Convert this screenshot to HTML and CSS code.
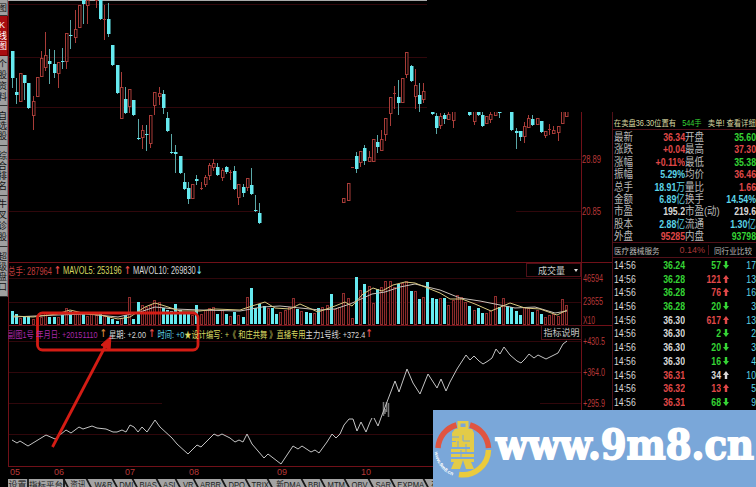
FILE: index.html
```html
<!DOCTYPE html>
<html lang="zh-CN">
<head>
  <meta charset="UTF-8" />
  <title>行情 K线图</title>
  <link rel="stylesheet" href="styles.css">
</head>
<body>
  <div class="app">

    <!-- Onglets verticaux -->
    <nav class="side">
      <a class="side-tab t-first">图</a>
      <a class="side-tab t-k active">K线图</a>
      <a class="side-tab t-info">个股资料</a>
      <a class="side-tab t-own">自选股</a>
      <a class="side-tab t-rank">综合排名</a>
      <a class="side-tab t-diag">牛叉诊股</a>
      <a class="side-tab t-disk">超级盘口</a>
    </nav>

    <main class="charts">
      <section class="pane price">
        <svg id="priceChart" width="604" height="262" viewBox="8 0 604 262">
          <path class="grid" d="M9 4.5H427M9 57.5H427M9 107.5H427M9 159.5H581M9 211.5H260M516 211.5H581"/>
          <path class="axis" d="M8.5 0V262M581.5 112V262"/>
          <path class="topline" d="M8 .5H427"/>
          <text class="scale" x="582" y="163" textLength="19" lengthAdjust="spacingAndGlyphs">28.89</text>
          <text class="scale" x="582" y="214.500" textLength="19" lengthAdjust="spacingAndGlyphs">20.85</text>
        </svg>
      </section>

      <section class="pane volume">
        <header class="pane-head">
          <div class="labels">
            <span class="red dim">总手: 287964</span><i class="arr red">↑</i>
            <span class="yellow">MAVOL5: 253196</span><i class="arr red">↑</i>
            <span class="white">MAVOL10: 269830</span><i class="arr last cyan">↓</i>
          </div>
          <button class="pick">成交量<b></b></button>
        </header>
        <svg id="volumeChart" width="604" height="63" viewBox="8 262 604 63">
          <path class="grid" d="M9 278.5H581M9 302.5H581"/>
          <path class="axis" d="M8.500 262V325M581.5 262V325M8 262.5H612"/>
          <text class="scale" x="583" y="282" textLength="20" lengthAdjust="spacingAndGlyphs">46594</text>
          <text class="scale" x="583" y="305" textLength="20" lengthAdjust="spacingAndGlyphs">23655</text>
          <text class="scale" x="583" y="323.5" textLength="12" lengthAdjust="spacingAndGlyphs">X10</text>
        </svg>
      </section>

      <section class="pane indicator">
        <header class="pane-head ind-head">
          <div class="labels">
            <span class="purple i-name">副图1号</span>
            <span class="purple">年月日: +20151110</span><i class="arr orange">↑</i>
            <span class="white">星期: +2.00</span><i class="arr red">↑</i>
            <span class="cyan">时间: +0</span>
            <span class="yellow">★设计编写: +《 和庄共舞 》直播专用</span>
            <span class="white">主力1号线: +372.4</span><i class="arr last red">↑</i>
          </div>
          <button class="explain">指标说明</button>
        </header>
        <svg id="indicatorChart" width="604" height="142" viewBox="8 325 604 142">
          <path class="grid" d="M9 341.5H581M9 372.5H581M9 403.5H162M540 403.5H581M9 434.5H581"/>
          <path class="axis" d="M8.5 325V467M581.5 325V467M8 466.5H612M8 325.500H612"/>
          <text class="scale" x="583" y="344.5" textLength="22" lengthAdjust="spacingAndGlyphs">+430.5</text>
          <text class="scale" x="583" y="375.500" textLength="22" lengthAdjust="spacingAndGlyphs">+364.0</text>
          <text class="scale" x="583" y="406.500" textLength="22" lengthAdjust="spacingAndGlyphs">+295.9</text>
          <path class="hatch" d="M383.5 402V416M386.500 402V412M388.500 403V417M385 409V414"/>
        </svg>
      </section>

      <div class="months">
        <span>05</span><span>06</span><span>07</span><span>08</span><span>09</span><span>10</span>
      </div>

      <nav class="tabs">
        <a class="flat">设置</a><a class="flat wide">指标平台</a>
        <a class="w23"><span>资讯</span></a><a class="w26"><span>W&amp;R</span></a><a class="w20"><span>DMI</span></a><a class="w24"><span>BIAS</span></a><a class="w19"><span>ASI</span></a><a class="w18"><span>VR</span></a><a class="w28"><span>ARBR</span></a><a class="w24"><span>DPO</span></a><a class="w22"><span>TRIX</span></a><a class="w34"><span>新DMA</span></a><a class="w19"><span>BBI</span></a><a class="w24"><span>MTM</span></a><a class="w24"><span>OBV</span></a><a class="w22"><span>SAR</span></a><a class="w33"><span>EXPMA</span></a><a class="w24"><span>布林</span></a>
      </nav>
    </main>

    <aside class="quote">
      <div class="notice"><span>在卖盘36.30位置有</span><span class="green">544手</span><span>卖单! 查看详细</span></div>
      <div class="facts">
        <span>最新</span><b class="red">36.34</b><span>开盘</span><b class="green">35.60</b>
        <span>涨跌</span><b class="red">+0.04</b><span>最高</span><b class="red">37.30</b>
        <span>涨幅</span><b class="red">+0.11%</b><span>最低</span><b class="green">35.38</b>
        <span>振幅</span><b class="cyan">5.29%</b><span>均价</span><b class="red">36.46</b>
        <span>总手</span><b class="cyan">18.91<i>万</i></b><span>量比</span><b class="red">1.66</b>
        <span>金额</span><b class="cyan">6.89<i>亿</i></b><span>换手</span><b class="cyan">14.54%</b>
        <span>市盈</span><b class="white">195.2</b><span>市盈(动)</span><b class="white">219.6</b>
        <span>股本</span><b class="cyan">2.88<i>亿</i></b><span>流通</span><b class="cyan">1.30<i>亿</i></b>
        <span>外盘</span><b class="red">95285</b><span>内盘</span><b class="green">93798</b>
      </div>
      <div class="sector"><span>医疗器械服务</span><em>0.14%</em><span class="peer">同行业比较</span></div>
      <div class="ticks" id="ticks"></div>
    </aside>

    <div class="cover"></div>

    <svg class="mark" width="180" height="150" viewBox="30 305 180 150">
      <rect x="37.500" y="313" width="160.500" height="37" rx="5"/>
      <path d="M52.500 447L106 345"/>
      <path class="head" d="M111 336L110 350L101 345Z"/>
    </svg>

    <div class="brand">
      <svg width="323" height="77" viewBox="433 410 323 77">
        <path class="ring-red" d="M438 448A25.500 25.500 0 0 1 456.500 425M470 425A25.500 25.500 0 0 1 488.500 448"/>
        <path class="ring-yellow" d="M488.500 450A25.500 25.500 0 0 1 459 474.500"/>
        <path class="man" fill-rule="evenodd" d="M457.500 421H468.500V429H472L474 433V450H470V447H452V433L455 429H457.500ZM460.500 423.500V427H465.500V423.500Z"/>
        <path class="man" d="M451 449H474V452H451ZM451 454H474V457H451ZM451 459H474V462H471L474 469H466L463 460L460 469H451L454 462H451Z"/>
        <path class="slit" d="M452 437H459M463 435V441H470M458 441V447M452 441.500H456M466 444V453M461 450V459"/>
        <path id="rim" fill="none" d="M434.500 452A29 29 0 0 0 457 477"/>
        <text class="rim-text"><textPath href="#rim" textLength="31">www.9m8.cn</textPath></text>
        <text class="site" x="496" y="459" textLength="258" lengthAdjust="spacingAndGlyphs">www.9m8.cn</text>
      </svg>
    </div>
  </div>

  <script src="chart.js"></script>
</body>
</html>
```
FILE: styles.css
```css
* { box-sizing: border-box; }

body {
  margin: 0;
  background: #000;
  overflow: hidden;
  font-family: "Liberation Sans", "Noto Sans CJK SC", sans-serif;
}

.app {
  position: relative;
  display: grid;
  grid-template-columns: 8px 604px 144px;
  width: 756px;
  height: 487px;
  overflow: hidden;
}

/* ===== Couleurs ===== */
.red { color: #e04848; }
.red.dim { color: #c03c3c; }
.green { color: #35d435; }
.cyan { color: #5cd5e8; }
.white { color: #d8d8d8; }
.yellow { color: #d8d860; }
.purple { color: #a828a8; }
.orange { color: #d08038; }

/* ===== Onglets de gauche ===== */
.side { display: flex; flex-direction: column; width: 8px; overflow: hidden; }
.side-tab {
  display: flex;
  align-items: center;
  justify-content: center;
  flex: none;
  width: 8px;
  padding-right: 3px;
  background: #a0a0a0;
  border-bottom: 1px solid #333;
  border-right: 1px solid #777;
  color: #111;
  font-size: 9px;
  line-height: 10px;
  writing-mode: vertical-rl;
  text-orientation: upright;
  white-space: nowrap;
}
.side-tab.active { background: #a80c10; border-color: #700; color: #fff; }
.t-first { height: 16px; }
.t-k { height: 40px; letter-spacing: 1px; }
.t-info { height: 50px; letter-spacing: 2px; }
.t-own { height: 40px; letter-spacing: 1px; }
.t-rank { height: 50px; letter-spacing: 1px; }
.t-diag { height: 51px; letter-spacing: 2px; }
.t-disk { height: 50px; letter-spacing: 1px; }

/* ===== Graphiques ===== */
.charts { display: flex; flex-direction: column; }
.pane { display: grid; flex: none; }
.pane > * { grid-area: 1 / 1; }
.pane svg { display: block; }
.price { height: 262px; }
.volume { height: 63px; }
.indicator { height: 142px; }

.grid { stroke: #30070b; fill: none; }
.axis { stroke: #701018; fill: none; }
.topline { stroke: #aaa; }
.scale { fill: #b83838; font-size: 10px; }
.up { fill: #000; stroke: #a83c38; }
.up-wick { stroke: #a83c38; fill: none; }
.down { fill: #66eaf0; }
.down-wick { stroke: #5aa8a8; fill: none; }
.vol-up { fill: #140405; stroke: #8c2c2c; }
.ma5 { fill: none; stroke: #d8c880; }
.ma10 { fill: none; stroke: #c8c0b8; }
.trend { fill: none; stroke: #c4c4c4; }
.hatch { fill: none; stroke: #777; stroke-width: 1.5; }

.pane-head {
  z-index: 1;
  display: flex;
  align-items: center;
  height: 16px;
  white-space: nowrap;
}
.labels {
  display: flex;
  align-items: center;
  width: 240px;
  font-size: 10px;
  transform: scaleX(.745);
  transform-origin: left;
}
.labels > * { flex: none; }
.labels .arr { width: 15px; font: bold 11px/11px "DejaVu Sans"; text-align: center; }
.labels .last { width: 9px; }
.pane-head button {
  margin-left: auto;
  border: 1px solid #501018;
  background: #000;
  padding: 0;
  color: #c8c8c8;
  font: 9px "Noto Sans CJK SC", sans-serif;
  line-height: 11px;
}
.pane-head .pick { width: 55px; height: 14px; margin-right: 31px; padding-left: 9px; }
.pick b {
  display: inline-block;
  margin: 0 0 2px 9px;
  border: 2.5px solid transparent;
  border-top: 3px solid #ddd;
  border-bottom: 0;
}
.ind-head { height: 17px; }
.ind-head .labels { font-size: 9.5px; transform: scaleX(.765); }
.i-name { margin-right: 3px; }
.ind-head .labels .arr { width: 15px; }
.ind-head .labels .last { width: 10px; }
.explain { width: 41px; height: 15px; margin-right: 30px; align-self: flex-start; }

.months {
  display: grid;
  grid-template-columns: 44px 71px 64px 88px 84px 1fr;
  flex: none;
  height: 12px;
  padding-left: 2px;
  color: #b83838;
  font-size: 9px;
  line-height: 10px;
}

.tabs { display: flex; height: 8px; overflow: hidden; background: #a4a4a4; color: #222; font-size: 9px; line-height: 12px; white-space: nowrap; }
.tabs a { position: relative; display: flex; justify-content: center; flex: none; }
.tabs a span { transform: translateX(2px) scaleX(.85); }
.tabs a:not(.flat)::before {
  content: "";
  position: absolute;
  left: 0;
  top: 0;
  width: 2px;
  height: 9px;
  background: #181818;
  transform: skewX(28deg);
}
.tabs .flat { width: 21px; border-right: 2px solid #222; }
.tabs .wide { width: 36px; font-size: 8.500px; }
.w18 { width: 18px; }
.w19 { width: 19px; }
.w20 { width: 20px; }
.w22 { width: 22px; }
.w23 { width: 23px; }
.w24 { width: 24px; }
.w26 { width: 26px; }
.w28 { width: 28px; }
.w33 { width: 33px; }
.w34 { width: 34px; }

/* ===== Panneau de cotation ===== */
.quote {
  margin-top: 112px;
  border-left: 1px solid #501018;
  overflow: hidden;
  white-space: nowrap;
}
.notice {
  display: flex;
  justify-content: space-between;
  align-items: center;
  width: 166px;
  height: 18px;
  padding: 3px 0 0 1px;
  border-bottom: 1px solid #501018;
  color: #d8d8a0;
  font-size: 8.500px;
  transform: scaleX(.86);
  transform-origin: left;
}
.facts {
  display: grid;
  grid-template-columns: 20px 51px 20px 1fr;
  grid-auto-rows: 12.4px;
  height: 113px;
  padding: 1px 0 0 1px;
  border-bottom: 1px solid #501018;
  font-size: 11px;
  line-height: 12.4px;
  color: #b8b8b8;
}
.facts span { transform: scaleX(.86); transform-origin: left; }
.facts b { text-align: right; font-size: 11.500px; transform: scaleX(.76); transform-origin: right; }
.facts i { font-style: normal; font-weight: normal; }
.sector {
  display: flex;
  align-items: center;
  height: 15px;
  padding-left: 1px;
  border-bottom: 1px solid #501018;
  color: #b8b8b8;
  font-size: 8px;
}
.sector span { transform: scaleX(.95); transform-origin: left; }
.sector em { margin-left: auto; padding-right: 3px; border-right: 1px solid #501018; font-style: normal; font-size: 9px; color: #a83838; }
.sector .peer { width: 42px; margin: 0 0 0 5px; }

.tick {
  display: grid;
  grid-template-columns: 30px 41px 36px 10px 1fr;
  height: 13.7px;
  padding-left: 1px;
  font-size: 11px;
  line-height: 14px;
  font-weight: bold;
  color: #d8d8d8;
}
.tick span { text-align: right; transform: scaleX(.79); transform-origin: right; }
.tick .time { text-align: left; transform-origin: left; font-weight: normal; }
.tick .last { font-weight: normal; }
.tick svg { display: block; margin: 3px 0 0 2px; fill: currentColor; }

/* ===== Calques ===== */
.cover { position: absolute; left: 427px; top: 0; width: 329px; height: 112px; background: #000; }
.mark { position: absolute; left: 30px; top: 305px; fill: none; stroke: #d41c14; stroke-width: 2.800; }
.mark .head { fill: #d41c14; stroke-width: 1; }
.brand { position: absolute; left: 433px; top: 410px; width: 323px; height: 77px; background: #7aa7d9; }
.brand svg { display: block; }
.ring-red { fill: none; stroke: #e05540; stroke-width: 5.500; }
.ring-yellow { fill: none; stroke: #ebcb3c; stroke-width: 5.500; }
.man { fill: #e3cb48; }
.slit { fill: none; stroke: #7aa7d9; stroke-width: 1; }
.rim-text { fill: #fff; font: bold 5px "Liberation Sans"; }
.site { fill: #fff; stroke: #fff; stroke-width: 1.800; font: bold 41px "DejaVu Serif", serif; }
```
FILE: chart.js
```js
const STEP = 4.2;
const X0 = 12;
const BASE = 324;

// [index, hausse (1) / baisse (0), haut du corps, bas du corps, haut mèche, bas mèche]
const candles = [
  [0,0,51,78,51,87],[1,0,92,95,78,103],[2,1,73,101,73,101],[3,0,75,83,75,99],[4,0,83,108,83,108],
  [5,1,101,115,96,129],[6,1,77,96,77,96],[7,1,58,76,51,76],[8,1,55,67,32,70],[9,0,61,64,49,83],
  [10,0,64,73,50,77],[11,1,62,73,62,87],[12,0,61,62,48,68],[13,1,33,61,33,68],[14,0,35,36,20,48],
  [15,1,29,37,10,42],[16,1,5,27,5,27],[17,0,0,4,0,23],[18,1,0,5,0,23],[20,1,0,0,0,7],
  [21,0,0,19,0,19],[22,1,19,19,5,39],[23,0,19,34,3,36],[24,0,45,65,45,65],[25,0,65,93,65,93],
  [26,1,87,118,72,118],[27,0,99,113,87,113],[28,1,89,106,89,112],[29,0,100,115,100,115],[30,0,138,139,119,139],
  [31,1,130,137,125,148],[32,0,134,135,125,150],[33,1,115,143,115,147],[34,1,92,105,92,114],[35,1,93,96,87,104],
  [36,0,94,108,90,113],[37,0,118,131,112,131],[38,0,152,153,134,153],[39,0,152,154,145,172],[40,0,156,173,156,173],
  [41,0,182,189,173,189],[42,0,188,199,182,203],[43,1,184,198,184,198],[44,0,179,181,175,184],[45,1,188,188,182,189],
  [46,1,177,184,175,186],[47,1,165,175,163,179],[48,1,163,167,159,170],[49,0,167,175,163,175],[50,1,170,177,168,180],
  [51,0,167,172,166,173],[52,1,172,172,170,179],[53,0,171,189,166,189],[54,1,184,197,184,204],[55,0,187,193,184,196],
  [56,1,178,187,178,190],[57,0,185,194,168,194],[58,0,210,211,195,211],[59,0,213,223,203,223],
  [79,1,198,202,198,202],[80,1,183,200,183,200],[81,1,167,167,167,167],[82,0,156,169,152,172],[83,1,151,162,151,166],
  [84,0,148,161,145,164],[85,1,157,161,151,161],[86,1,139,161,139,161],[87,0,142,147,135,152],[88,1,139,150,130,150],
  [89,1,118,134,118,140],[90,1,97,113,97,125],[91,1,93,93,86,108],[92,0,97,103,80,114],[93,1,78,102,78,102],
  [94,1,52,74,52,77],[95,0,66,81,65,81],[96,1,85,96,69,108],[97,0,95,104,83,111],[98,1,91,99,83,102],
  [100,0,112,114,112,114],[101,0,116,128,113,133],[102,1,116,125,113,128],[103,0,115,119,113,123],[104,1,114,119,112,119],
  [105,1,110,120,110,127],[109,0,112,115,112,115],[110,1,110,121,110,124],[111,0,112,115,112,115],[112,0,115,126,112,126],
  [113,1,116,123,116,123],[114,1,114,119,112,122],[115,1,110,115,110,115],[116,0,112,113,112,117],[119,0,112,130,112,130],
  [120,0,131,133,128,148],[121,0,131,137,131,140],[122,1,126,136,122,142],[123,1,118,127,115,127],[124,0,119,125,115,125],
  [125,1,118,124,118,124],[126,0,121,132,121,132],[127,1,131,135,131,137],[128,1,129,129,124,134],[129,1,130,133,126,133],
  [130,1,126,132,126,140],[131,1,108,123,108,123],[132,1,108,116,108,116]
];

// Sommet de chaque barre de volume, "c" = barre pleine
const volumes = ('311c 314c 318 316c 316c 319 318 317 312 317c 317c 317 315c 308 311c 311 314 314c 316 314 315 314c 316 317c 319c ' +
  '321c 318 315c 297 319c 302c 305 307 305 300 302 308c 310c 311c 304c 310c 313c 314c 315 305c 314 310 308 307 314c ' +
  '310 314c 316 312c 315 317c 297 288c 308c 304c 306c 308 308c 314c 312 310 307 298 309c 311 312c 313c 313 308c 307 ' +
  '305 294c 309 307 293 298 318 277c 290 284c 286 303 289c 287 281 281 287 284c 283 281 291c 291 299c 297 282c ' +
  '298c 299c 298 298c 305 300 295 297 302 306c 310 308c 313c 313 311 296 307c 298 306c 307c 311c 315c 307 308 312c ' +
  '310 314c 317 315 314 316 299 305').split(' ');

const ma5 = '13,316 33,317 57,314 70,310 87,314 100,315 118,319 130,317 145,307 155,303 165,306 180,311 200,311 215,309 240,310 252,306 265,302 275,308 290,309 300,304 318,312 335,306 345,302 352,306 363,294 373,288 382,291 393,285 405,282 415,283 425,287 440,293 450,299 462,299 475,304 491,311 510,303 525,308 540,309 557,315 567,310';
const ma10 = '13,317 57,315 87,314 118,317 140,312 155,307 175,309 200,310 240,311 262,307 280,306 300,308 320,310 335,309 350,304 372,294 385,292 400,287 415,284 440,290 460,298 480,301 500,305 515,308 535,307 555,313 567,311';

const trend = [
  '12,440 17,443 20,441 28,446 46,435 55,439 66,430 71,433 79,427 83,429 92,426 97,428 106,429 113,432 117,432 122,430 126,432 130,425 134,427 138,432 142,427 147,432 155,420 160,427 172,438 177,444 188,454 197,445 201,447 214,434 218,436 222,434 230,438 235,442 239,440 243,442 247,434 252,444 264,458 268,454 281,464 293,446 298,449 302,446 311,452 315,450 319,453 327,442 332,434 336,438 340,434 344,425 349,419 353,419 357,431 361,422 366,432 370,422 372,418',
  '374,418 378,426 382,415 395,381 399,392 407,369 413,383 420,394 428,374 437,388 441,379 446,391 450,382 457,369 466,355 470,360 474,356 479,361 483,364 488,361 492,358 496,349 500,354 504,347 510,355 517,361 521,363 525,359 529,354 534,358 538,355 546,359 558,353 563,344 567,341'
];

// [heure, prix, couleur prix, volume, couleur volume, sens, dernier]
const ticks = [
  ['14:56','36.24','green','57','green','down','17'],
  ['14:56','36.28','green','121','red','up','13'],
  ['14:56','36.28','green','76','red','up','16'],
  ['14:56','36.28','green','20','green','down','3'],
  ['14:56','36.30','white','617','red','up','13'],
  ['14:56','36.30','white','2','green','down','2'],
  ['14:56','36.30','white','20','green','down','3'],
  ['14:56','36.30','white','16','green','down','4'],
  ['14:56','36.31','red','34','white','up','10'],
  ['14:56','36.32','red','13','red','up','5'],
  ['14:56','36.31','red','68','green','down','9']
];

function add(svg, markup) {
  svg.insertAdjacentHTML('beforeend', markup);
}

function drawCandles() {
  let out = '';
  candles.forEach(([i, up, top, bottom, high, low]) => {
    const x = Math.round(X0 + STEP * i - 0.5) + 0.5;
    out += `<path class="${up ? 'up-wick' : 'down-wick'}" d="M${x} ${high}V${low + 1}"/>`;
    if (up && bottom - top > 1) {
      out += `<rect class="up" x="${x - 1}" y="${top + 0.5}" width="2.5" height="${bottom - top}"/>`;
    } else if (up) {
      out += `<path class="up-wick" d="M${x - 1.5} ${top + 0.5}h3"/>`;
    } else {
      out += `<rect class="down" x="${x - 1.5}" y="${top}" width="3.500" height="${bottom - top}"/>`;
    }
  });
  add(document.getElementById('priceChart'), out);
}

function drawVolume() {
  let out = '';
  volumes.forEach((v, i) => {
    const top = parseInt(v);
    const x = Math.round(X0 + STEP * i - 0.5) + 0.5;
    if (v.endsWith('c')) {
      out += `<rect class="down" x="${x - 1.5}" y="${top}" width="3" height="${BASE - top}"/>`;
    } else {
      out += `<rect class="vol-up" x="${x - 1}" y="${top + 0.5}" width="2" height="${BASE - top}"/>`;
    }
  });
  out += `<polyline class="ma10" points="${ma10}"/><polyline class="ma5" points="${ma5}"/>`;
  add(document.getElementById('volumeChart'), out);
}

function drawTicks() {
  const arrows = {
    up: 'M3 0L6 4H4.200V8H1.800V4H0Z',
    down: 'M3 8L0 4H1.800V0H4.200V4H6Z'
  };
  document.getElementById('ticks').innerHTML = ticks.map(t => `
    <div class="tick">
      <span class="time">${t[0]}</span><span class="${t[2]}">${t[1]}</span><span class="${t[4]}">${t[3]}</span>
      <svg class="${t[4]}" width="6" height="8"><path d="${arrows[t[5]]}"/></svg><span class="cyan last">${t[6]}</span>
    </div>`).join('');
}

drawCandles();
drawVolume();
add(document.getElementById('indicatorChart'), trend.map(p => `<polyline class="trend" points="${p}"/>`).join(''));
drawTicks();
```
